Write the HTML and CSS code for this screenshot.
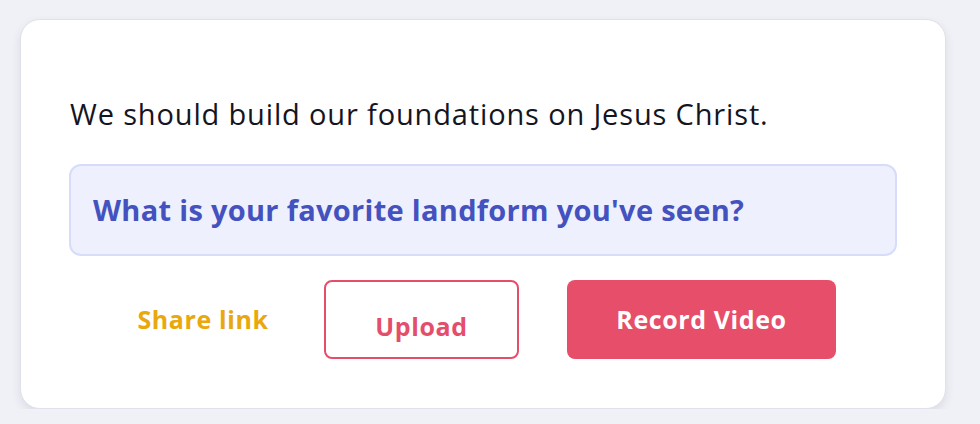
FILE: index.html
```html
<!DOCTYPE html>
<html>
<head>
<meta charset="utf-8">
<link rel="stylesheet" href="styles.css">
</head>
<body>
<div class="card">
  <p class="lead">We should build our foundations on Jesus Christ.</p>
  <div class="question">What is your favorite landform you've seen?</div>
  <div class="actions">
    <button class="share">Share link</button>
    <button class="upload">Upload</button>
    <button class="record">Record Video</button>
  </div>
</div>
</body>
</html>
```
FILE: styles.css
```css
html, body {
  margin: 0;
  padding: 0;
  background: #f0f1f6;
  font-family: "Open Sans", "Noto Sans", sans-serif;
}
body {
  padding: 19px 34px 0 20px;
}
.card {
  box-sizing: border-box;
  width: 926px;
  height: 390px;
  background: #ffffff;
  border: 1px solid #e0e1ea;
  border-radius: 20px;
  box-shadow: 0 4px 10px rgba(40, 45, 80, 0.1);
  padding: 78px 48px 0 48px;
}
.lead {
  margin: 0 0 34px 1px;
  font-size: 29px;
  line-height: 32px;
  letter-spacing: 0.85px;
  color: #15151f;
}
.question {
  box-sizing: border-box;
  height: 92px;
  display: flex;
  align-items: center;
  padding: 0 22px 2px 22px;
  background: #eef0fd;
  border: 2px solid #d6dcfa;
  border-radius: 12px;
  font-size: 29px;
  font-weight: 700;
  letter-spacing: 0.3px;
  color: #4452c0;
}
.actions {
  display: flex;
  margin-top: 24px;
}
button {
  font-family: inherit;
  font-size: 25px;
  font-weight: 700;
  letter-spacing: 0.6px;
  cursor: pointer;
  border-radius: 8px;
  box-sizing: border-box;
  height: 79px;
  padding: 0;
}
.share {
  width: 172px;
  margin-left: 48px;
  margin-right: 35px;
  background: transparent;
  border: none;
  color: #e9a80c;
  padding-bottom: 2px;
}
.upload {
  width: 195px;
  background: #ffffff;
  border: 2px solid #e54e6b;
  color: #e54e6b;
  padding-top: 12px;
  margin-right: 48px;
}
.record {
  width: 269px;
  background: #e64e6a;
  border: none;
  color: #ffffff;
  padding-bottom: 2px;
}
```
